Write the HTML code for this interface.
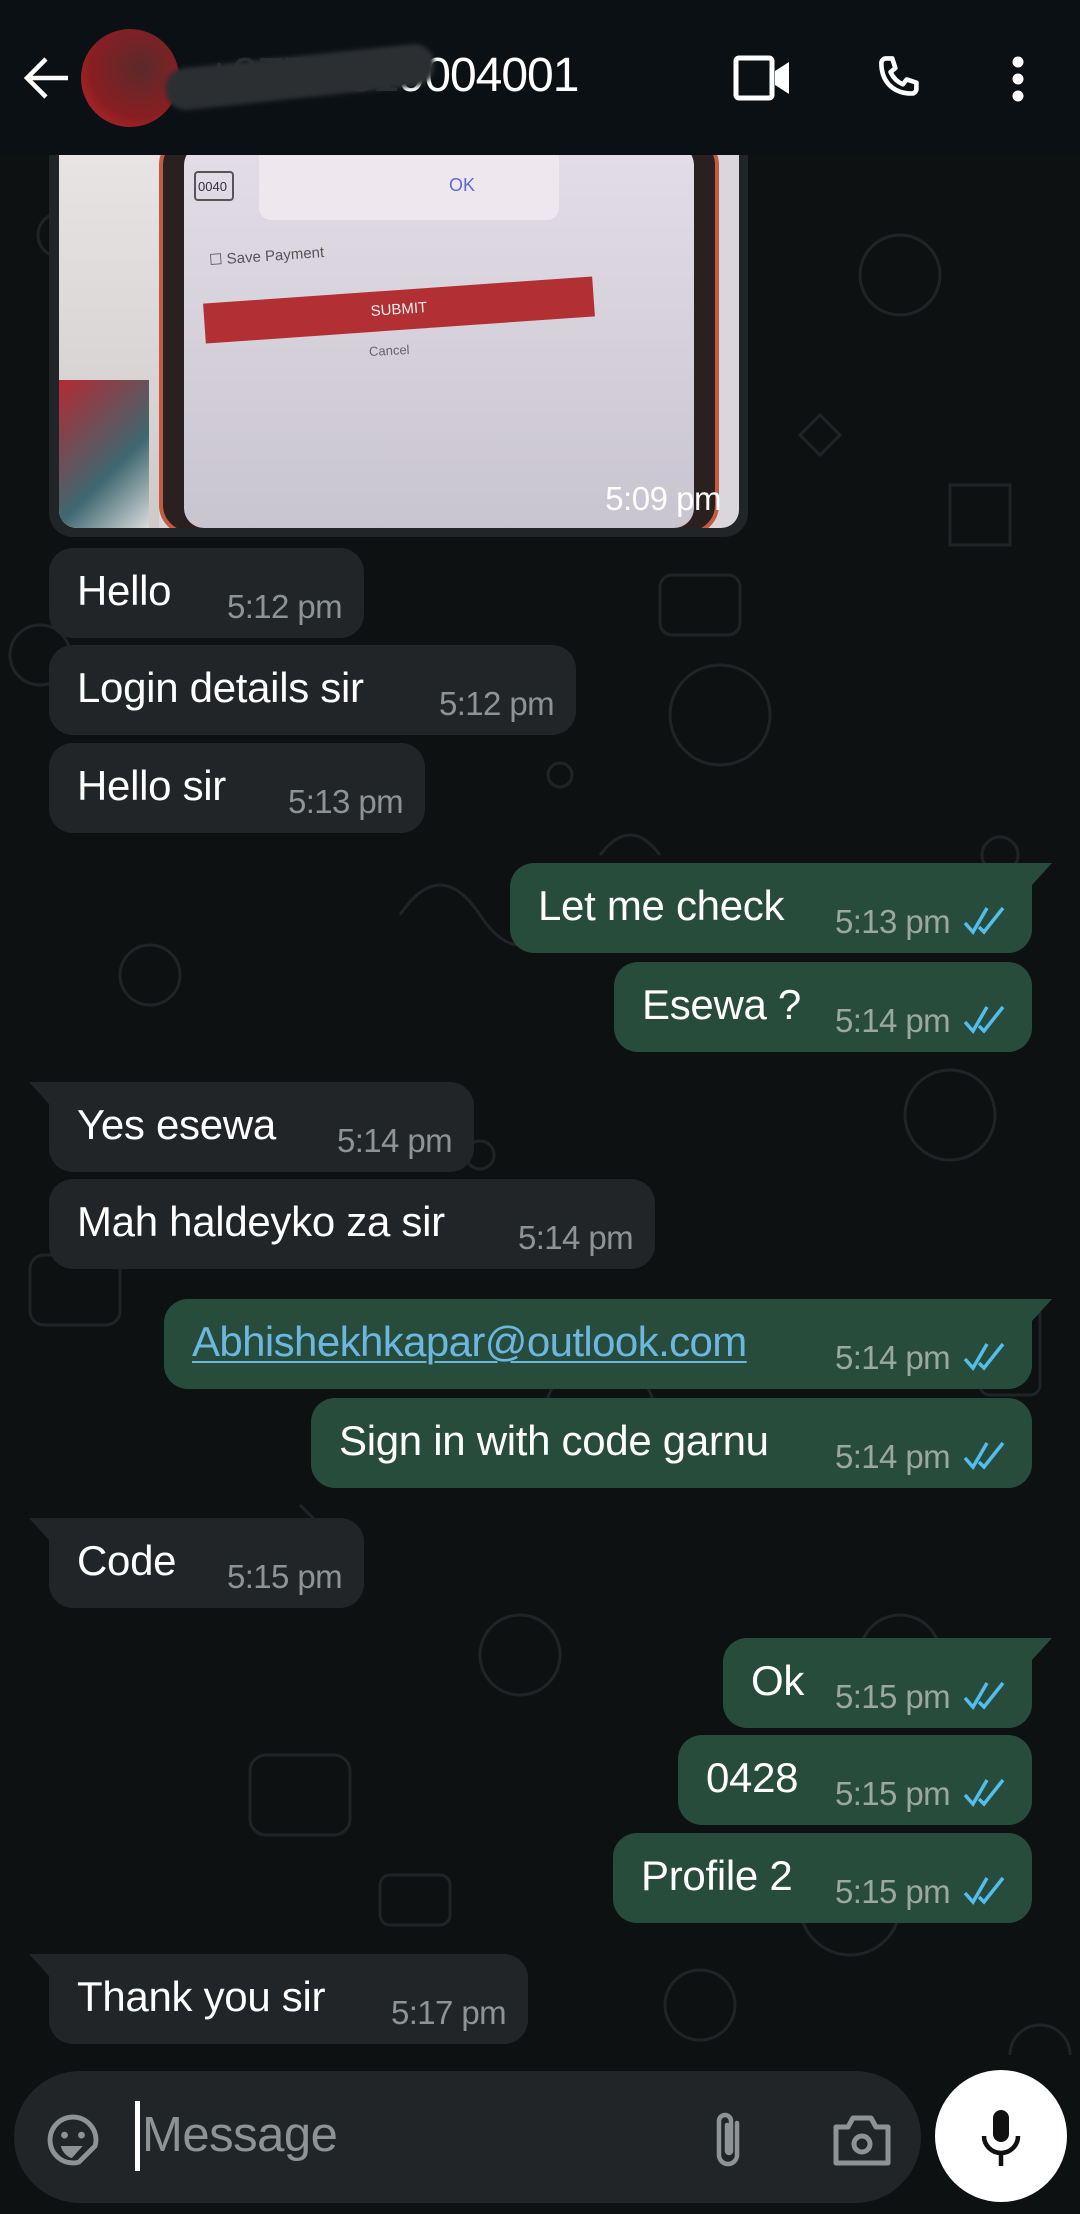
<!DOCTYPE html>
<html><head><meta charset="utf-8"><style>
*{margin:0;padding:0;box-sizing:border-box}
body{width:1080px;height:2214px;overflow:hidden;background:#0e1112;font-family:"Liberation Sans",sans-serif;position:relative}
.hdr{position:absolute;left:0;top:0;width:1080px;height:155px;background:#0b1014}
.b{position:absolute;height:90px;border-radius:24px;color:#fff;font-size:42px}
.in{background:#222528}
.out{background:#284c3c}
.b .t{position:absolute;left:28px;top:19px;white-space:nowrap;letter-spacing:-0.3px}
.b .tm{position:absolute;bottom:12px;font-size:33px;color:#8e9396;white-space:nowrap;letter-spacing:-0.6px}
.in .tm{right:22px}
.out .tm{right:82px;color:#9aa8a0}
.out .ck{position:absolute;right:24px;bottom:18px}
.tr{border-top-right-radius:0}
.tr::before{content:"";position:absolute;right:-20px;top:0;border-top:22px solid #284c3c;border-right:20px solid transparent}
.tl{border-top-left-radius:0}
.tl::before{content:"";position:absolute;left:-20px;top:0;border-top:22px solid #222528;border-left:20px solid transparent}
</style></head><body>
<svg style="position:absolute;left:0;top:155px" width="1080" height="1900" stroke="#202426" stroke-width="3" fill="none">
<circle cx="60" cy="80" r="22"/><circle cx="900" cy="120" r="40"/><path d="M820 260 l20 20 l-20 20 l-20-20z"/><circle cx="720" cy="560" r="50"/><rect x="660" y="420" width="80" height="60" rx="12"/><circle cx="150" cy="820" r="30"/><path d="M400 760 q40-60 80 0 t80 0"/><circle cx="950" cy="960" r="45"/><rect x="30" y="1100" width="90" height="70" rx="14"/><circle cx="600" cy="1260" r="55"/><path d="M300 1350 l40 40 l-40 40"/><circle cx="900" cy="1500" r="40"/><rect x="250" y="1600" width="100" height="80" rx="16"/><circle cx="850" cy="1750" r="50"/><circle cx="560" cy="620" r="12"/><circle cx="480" cy="1000" r="14"/><circle cx="1000" cy="700" r="18"/><path d="M950 330 h60 v60 h-60z"/>
<circle cx="40" cy="500" r="30"/><path d="M600 700 q30 -40 60 0"/><rect x="980" y="1150" width="60" height="90" rx="10"/><circle cx="520" cy="1500" r="40"/><path d="M100 1400 l30 -30 l30 30 l-30 30z"/><circle cx="700" cy="1850" r="35"/><rect x="380" y="1720" width="70" height="50" rx="10"/><circle cx="1040" cy="1900" r="30"/><path d="M860 830 q40 20 80 0"/><circle cx="580" cy="300" r="25"/>
</svg>
<div class="hdr">
<svg style="position:absolute;left:22px;top:56px" width="48" height="44" viewBox="0 0 48 44"><path d="M46 22H6M24 3L5 22l19 19" stroke="#fff" stroke-width="4.5" fill="none"/></svg>
<div style="position:absolute;left:81px;top:29px;width:98px;height:98px;border-radius:50%;background:radial-gradient(circle at 60% 40%,#5a2a2a,#8a1e22 60%,#c42b2b)"></div>
<div style="position:absolute;left:205px;top:48px;font-size:48px;color:#fff;letter-spacing:-1px"><span style="color:#2a2d30">+977 981</span>9004001</div>
<div style="position:absolute;left:165px;top:56px;width:270px;height:42px;background:#2c2f32;border-radius:20px;transform:rotate(-6deg);filter:blur(2px)"></div>
<svg style="position:absolute;left:733px;top:54px" width="60" height="48" viewBox="0 0 60 48"><rect x="3" y="4" width="36" height="40" rx="3" stroke="#fff" stroke-width="5" fill="none"/><path d="M42 17l14-9v32l-14-9z" fill="#fff"/></svg>
<svg style="position:absolute;left:868px;top:50px" width="62" height="58" viewBox="0 0 24 24"><path d="M6.6 3.5l2.6 0 1.3 4-2 1.6c1 2.3 2.8 4.1 5.1 5.1l1.6-2 4 1.3v2.6c0 1-.8 1.9-1.9 1.9C9.6 18 4.7 13.1 4.7 5.4c0-1 .9-1.9 1.9-1.9z" stroke="#fff" stroke-width="1.9" fill="none" stroke-linejoin="round"/></svg>
<svg style="position:absolute;left:1008px;top:55px" width="20" height="48"><circle cx="10" cy="7" r="5.5" fill="#fff"/><circle cx="10" cy="24" r="5.5" fill="#fff"/><circle cx="10" cy="41" r="5.5" fill="#fff"/></svg>
</div>
<div style="position:absolute;left:49px;top:155px;width:699px;height:382px;background:#222528;border-radius:0 0 24px 24px;overflow:hidden">
<div style="position:absolute;left:10px;top:0;width:680px;height:373px;border-radius:0 0 18px 18px;overflow:hidden;background:#d9d6dc">
<div style="position:absolute;left:0;top:0;width:100px;height:373px;background:linear-gradient(#e8e4e4,#cfcaca)"></div>
<div style="position:absolute;left:0;top:225px;width:90px;height:150px;background:linear-gradient(135deg,#b22a34,#3e6870 60%,#ddd)"></div>
<div style="position:absolute;left:100px;top:-20px;width:560px;height:400px;background:#2a2020;border-radius:30px;border:4px solid #c45a40"></div>
<div style="position:absolute;left:125px;top:-10px;width:510px;height:383px;background:linear-gradient(#e2dde6,#c9c5d0);border-radius:20px"></div>
<div style="position:absolute;left:200px;top:-10px;width:300px;height:75px;background:#efe7ee;border-radius:0 0 12px 12px"></div>
<div style="position:absolute;left:390px;top:20px;color:#5a6cc8;font-size:18px">OK</div>
<div style="position:absolute;left:135px;top:16px;width:40px;height:30px;border:2px solid #555;border-radius:4px;font-size:13px;color:#333;padding:6px 2px">0040</div>
<div style="position:absolute;left:150px;top:92px;font-size:15px;color:#555;transform:rotate(-4deg)">☐ Save Payment</div>
<div style="position:absolute;left:145px;top:135px;width:390px;height:40px;background:#b22f33;transform:rotate(-4deg);color:#eee;font-size:15px;text-align:center;line-height:40px">SUBMIT</div>
<div style="position:absolute;left:310px;top:188px;font-size:13px;color:#666;transform:rotate(-3deg)">Cancel</div>
<div style="position:absolute;right:18px;bottom:10px;font-size:33px;color:#fff;letter-spacing:-0.5px">5:09 pm</div>
</div></div>
<div class="b in" style="left:49px;top:548px;width:315px"><span class="t">Hello</span><span class="tm">5:12 pm</span></div>
<div class="b in" style="left:49px;top:645px;width:527px"><span class="t">Login details sir</span><span class="tm">5:12 pm</span></div>
<div class="b in" style="left:49px;top:743px;width:376px"><span class="t">Hello sir</span><span class="tm">5:13 pm</span></div>
<div class="b out tr" style="left:510px;top:863px;width:522px"><span class="t">Let me check</span><span class="tm">5:13 pm</span><svg class="ck" width="46" height="30" viewBox="0 0 44 30"><path d="M2 18l8 9L24 3M16 22l5 5L40 3" stroke="#53bdeb" stroke-width="3.5" fill="none"/></svg></div>
<div class="b out" style="left:614px;top:962px;width:418px"><span class="t">Esewa ?</span><span class="tm">5:14 pm</span><svg class="ck" width="46" height="30" viewBox="0 0 44 30"><path d="M2 18l8 9L24 3M16 22l5 5L40 3" stroke="#53bdeb" stroke-width="3.5" fill="none"/></svg></div>
<div class="b in tl" style="left:49px;top:1082px;width:425px"><span class="t">Yes esewa</span><span class="tm">5:14 pm</span></div>
<div class="b in" style="left:49px;top:1179px;width:606px"><span class="t">Mah haldeyko za sir</span><span class="tm">5:14 pm</span></div>
<div class="b out tr" style="left:164px;top:1299px;width:868px"><span class="t" style="color:#6cb7e0;text-decoration:underline;text-underline-offset:5px;text-decoration-thickness:2px;letter-spacing:-0.6px">Abhishekhkapar@outlook.com</span><span class="tm">5:14 pm</span><svg class="ck" width="46" height="30" viewBox="0 0 44 30"><path d="M2 18l8 9L24 3M16 22l5 5L40 3" stroke="#53bdeb" stroke-width="3.5" fill="none"/></svg></div>
<div class="b out" style="left:311px;top:1398px;width:721px"><span class="t">Sign in with code garnu</span><span class="tm">5:14 pm</span><svg class="ck" width="46" height="30" viewBox="0 0 44 30"><path d="M2 18l8 9L24 3M16 22l5 5L40 3" stroke="#53bdeb" stroke-width="3.5" fill="none"/></svg></div>
<div class="b in tl" style="left:49px;top:1518px;width:315px"><span class="t">Code</span><span class="tm">5:15 pm</span></div>
<div class="b out tr" style="left:723px;top:1638px;width:309px"><span class="t">Ok</span><span class="tm">5:15 pm</span><svg class="ck" width="46" height="30" viewBox="0 0 44 30"><path d="M2 18l8 9L24 3M16 22l5 5L40 3" stroke="#53bdeb" stroke-width="3.5" fill="none"/></svg></div>
<div class="b out" style="left:678px;top:1735px;width:354px"><span class="t">0428</span><span class="tm">5:15 pm</span><svg class="ck" width="46" height="30" viewBox="0 0 44 30"><path d="M2 18l8 9L24 3M16 22l5 5L40 3" stroke="#53bdeb" stroke-width="3.5" fill="none"/></svg></div>
<div class="b out" style="left:613px;top:1833px;width:419px"><span class="t">Profile 2</span><span class="tm">5:15 pm</span><svg class="ck" width="46" height="30" viewBox="0 0 44 30"><path d="M2 18l8 9L24 3M16 22l5 5L40 3" stroke="#53bdeb" stroke-width="3.5" fill="none"/></svg></div>
<div class="b in tl" style="left:49px;top:1954px;width:479px"><span class="t">Thank you sir</span><span class="tm">5:17 pm</span></div>
<div style="position:absolute;left:14px;top:2071px;width:907px;height:132px;border-radius:66px;background:#222528">
<svg style="position:absolute;left:30px;top:40px" width="58" height="58" viewBox="0 0 24 24"><path d="M12 2.5a9.5 9.5 0 1 0 0 19c1 0 2-.2 2.5-.4l6.6-6.6c.3-.8.4-1.6.4-2.5A9.5 9.5 0 0 0 12 2.5z" stroke="#8e9396" stroke-width="2" fill="none"/><circle cx="8.5" cy="10" r="1.4" fill="#8e9396"/><circle cx="15.5" cy="10" r="1.4" fill="#8e9396"/><path d="M7 14.5h9l-4.5 5c-2-.5-4-2.5-4.5-5z" fill="#8e9396"/></svg>
<div style="position:absolute;left:121px;top:30px;width:5px;height:70px;background:#fff"></div>
<div style="position:absolute;left:128px;top:36px;font-size:49px;color:#8e9396;letter-spacing:-0.5px">Message</div>
<svg style="position:absolute;left:695px;top:38px" width="40" height="62" viewBox="0 0 40 62"><path d="M28 14v32a9 9 0 0 1-18 0V12a6 6 0 0 1 12 0v30a2 2 0 0 1-4 0V16" stroke="#8e9396" stroke-width="4.5" fill="none" stroke-linecap="round"/></svg>
<svg style="position:absolute;left:818px;top:42px" width="60" height="54" viewBox="0 0 60 54"><path d="M4 14h12l5-9h18l5 9h12v36H4z" stroke="#8e9396" stroke-width="5" fill="none" stroke-linejoin="round"/><circle cx="30" cy="31" r="8" stroke="#8e9396" stroke-width="5" fill="none"/></svg>
</div>
<div style="position:absolute;left:935px;top:2070px;width:132px;height:132px;border-radius:50%;background:#fff">
<svg style="position:absolute;left:44px;top:38px" width="44" height="60" viewBox="0 0 44 60"><rect x="14" y="2" width="16" height="32" rx="8" fill="#111"/><path d="M5 28a17 17 0 0 0 34 0" stroke="#111" stroke-width="4.5" fill="none"/><path d="M22 45v13" stroke="#111" stroke-width="4.5"/></svg>
</div>
</body></html>
